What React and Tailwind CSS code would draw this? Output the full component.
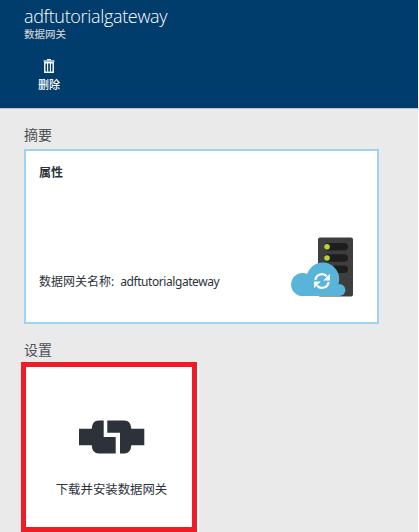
function TrashIcon() {
  return (
    <svg width="12" height="14" viewBox="0 0 12 14" className="block" fill="none" stroke="#fff">
      <path d="M4 .6h4" strokeWidth="1.1" />
      <path d="M.5 2h11" strokeWidth="1.3" />
      <path d="M1.8 3.8v9.4h8.4V3.8z" strokeWidth="1.4" />
      <path d="M4.6 4v8.5M7.4 4v8.5" strokeWidth="1.1" />
    </svg>
  );
}

function GatewayIcon() {
  return (
    <svg width="63" height="60" viewBox="0 0 63 60" className="block">
      <rect x="27" y="0.5" width="35" height="59" rx="2" fill="#3e3e3f" />
      <g fill="#1e1e1e">
        <rect x="33" y="6" width="24" height="7.6" rx="3.8" />
        <rect x="33" y="17.2" width="24" height="7.6" rx="3.8" />
        <rect x="33" y="28.4" width="24" height="7.6" rx="3.8" />
      </g>
      <circle cx="36" cy="9.8" r="2.8" fill="#b8d432" />
      <circle cx="36" cy="21" r="2.8" fill="#b8d432" />
      <g fill="#59b4d9">
        <circle cx="11.7" cy="47.5" r="11.6" />
        <circle cx="31.8" cy="42" r="16.4" />
        <circle cx="48.3" cy="53" r="6.1" />
        <path d="M11.7 45h32l4.600 8v6.100H11.700z" />
      </g>
      <g fill="none" stroke="#fff" strokeWidth="2.2">
        <path d="M24.300 43a6.700 6.700 0 0 1 11.500-3.700" />
        <path d="M37.700 45a6.700 6.700 0 0 1-11.500 3.700" />
      </g>
      <path d="M39 36.800v6.700h-6.700zM23 51.200v-6.700h6.700z" fill="#fff" />
    </svg>
  );
}

function ConnectorIcon() {
  return (
    <svg width="66" height="34" viewBox="0 0 66 34" className="block" fill="#2d323a">
      <path d="M0 8.7h12.7Q13.2 .4 19.700 .4h5V17h12v16.600h-17Q13.200 33.600 12.700 25.300H0z" />
      <path d="M28.300 .4h17Q51.800 .4 52.300 8.700h13v16.600h-13Q51.800 33.600 45.300 33.600H41V12.700H28.300z" />
    </svg>
  );
}

export default function App() {
  return (
    <div className="h-[532px] w-[419px] overflow-hidden bg-white pr-px font-['Noto_Sans','Noto_Sans_CJK_SC',sans-serif] whitespace-nowrap text-[#2d323a]">
      <div className="flex h-full flex-col bg-[#eaeaea]">
        <header className="flex h-[109px] shrink-0 flex-col border-b border-[#bfc1c4] bg-[#003c6c] pt-1 pl-6 text-white">
          <h1 className="h-6 text-[18px] leading-6 font-light tracking-[-0.33px] font-['Open_Sans','Noto_Sans',sans-serif]">adftutorialgateway</h1>
          <p className="h-[13px] text-[10.5px] leading-[13px] font-medium text-[#c7c9cf]">数据网关</p>
          <button className="mt-[18px] flex w-[50px] flex-col items-center">
            <TrashIcon />
            <span className="mt-1 text-[11px] leading-4 font-medium">删除</span>
          </button>
        </header>

        <main className="flex flex-1 flex-col pl-6">
          <h2 className="mt-4 h-5 text-[14px] leading-5 text-[#4d5057]">摘要</h2>
          <section className="mt-1 flex h-[175px] w-[355px] shrink-0 flex-col justify-between border-2 border-[#9bd5f3] bg-white pt-[13px] pr-[23px] pb-[25px] pl-[13px]">
            <h3 className="text-[12px] leading-[18px] font-bold">属性</h3>
            <div className="flex items-end justify-between">
              <p className="mb-[6px] flex text-[12px] leading-[18px]">
                <span>数据网关名称:</span>
                <span className="ml-[6px] tracking-[-0.43px]">adftutorialgateway</span>
              </p>
              <GatewayIcon />
            </div>
          </section>

          <h2 className="mt-4 h-5 text-[14px] leading-5 text-[#4d5057]">设置</h2>
          <div className="mt-[2px] -ml-[3px] flex w-[178px] bg-white">
            <section className="flex h-[170px] w-[176px] flex-col items-center border-[5px] border-[#ee1c25] bg-white pt-[53px] pl-[5px]">
              <ConnectorIcon />
              <p className="mt-[26px] text-[12.4px] leading-5">下载并安装数据网关</p>
            </section>
          </div>
        </main>
      </div>
    </div>
  );
}
